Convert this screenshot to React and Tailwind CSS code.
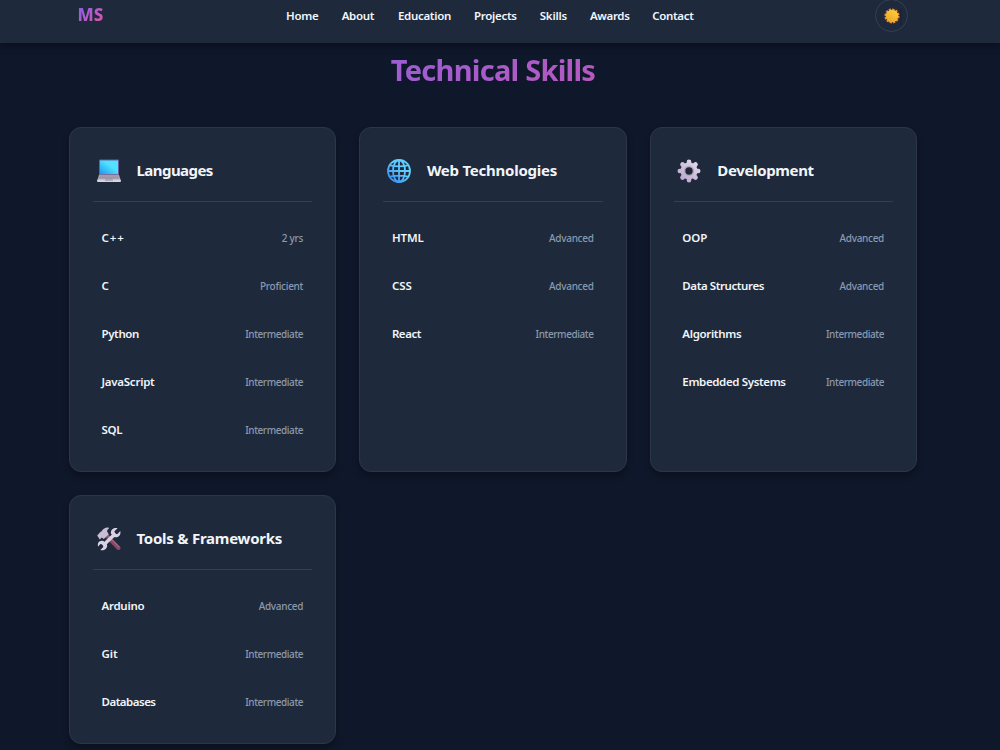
const nav = [
  ["Home", "w-[32.5px] tracking-[-0.3px]"],
  ["About", "w-[33px] tracking-[-0.3px]"],
  ["Education", "w-[53px] tracking-[-0.3px]"],
  ["Projects", "w-[42.5px] tracking-[-0.3px]"],
  ["Skills", "w-[27px] tracking-[-0.2px]"],
  ["Awards", "w-[39px] tracking-[-0.35px]"],
  ["Contact", "w-[42px] tracking-[-0.3px]"],
];

function Laptop() {
  return (
    <svg viewBox="0 0 24 24" className="size-6">
      <defs>
        <linearGradient id="screen" x1="1" y1="0" x2="0" y2="1">
          <stop offset="0.4" stopColor="#50e2ff" />
          <stop offset="1" stopColor="#1f98f0" />
        </linearGradient>
      </defs>
      <rect x="2" y="0.5" width="20" height="15.5" rx="0.8" fill="#66609a" />
      <rect x="3" y="1.5" width="18" height="13.5" fill="url(#screen)" />
      <path d="M2 15.8h20l1.6 5.2H.4z" fill="#aaa3b5" />
      <path d="M3 17h18M2.6 18.6h18.8" stroke="#8d8798" strokeWidth="0.7" strokeDasharray="1.4 .5" />
      <path d="M8.5 19.7h7l.4 1.5H8z" fill="#7d778a" />
      <rect x="0.2" y="20.6" width="23.6" height="2.4" rx="0.6" fill="#d8d3e2" />
      <path d="M8 21.4h8" stroke="#a29bae" strokeWidth="0.8" />
    </svg>
  );
}

function Globe() {
  return (
    <svg viewBox="0 0 24 24" className="size-6">
      <defs>
        <linearGradient id="globe" gradientUnits="userSpaceOnUse" x1="22" y1="2" x2="3" y2="22">
          <stop offset="0.4" stopColor="#5fcdff" />
          <stop offset="1" stopColor="#3a8cf0" />
        </linearGradient>
      </defs>
      <g fill="none" stroke="url(#globe)" strokeWidth="1.8">
        <circle cx="12" cy="12" r="11" />
        <ellipse cx="12" cy="12" rx="6" ry="11" />
        <path d="M12 1V23M1 12H23M3 6.3Q12 8.400 21 6.300M3 17.700Q12 15.600 21 17.700" />
      </g>
    </svg>
  );
}

function Gear() {
  return (
    <svg viewBox="0 0 24 24" className="size-6">
      <defs>
        <linearGradient id="gear" gradientUnits="userSpaceOnUse" x1="20" y1="2" x2="5" y2="22">
          <stop offset="0" stopColor="#e2dcec" />
          <stop offset="1" stopColor="#bba6cd" />
        </linearGradient>
      </defs>
      <g stroke="url(#gear)" strokeWidth="4.6" strokeLinecap="round">
        <path d="M12 2.800V21.200M2.800 12H21.200M5.500 5.500l13 13M18.500 5.500l-13 13" />
      </g>
      <circle cx="12" cy="12" r="8.5" fill="url(#gear)" />
      <circle cx="12" cy="12" r="5.200" fill="#b4a8c2" />
      <circle cx="12" cy="12" r="3.700" fill="#1f2939" />
    </svg>
  );
}

function Tools() {
  return (
    <svg viewBox="0 0 24 24" className="size-6">
      <path d="M9.5 8.5l12 12.5" stroke="#86496a" strokeWidth="4" strokeLinecap="round" />
      <path d="M11 8.8L22 20" stroke="#a9657a" strokeWidth="1.1" strokeLinecap="round" />
      <path d="M.2 8.400L3.600 4.700l.8-.2C5.800 2.200 7.400.5 11.500.4L12 1.500C10.300 2.600 9.900 3.400 10.300 5l1.500 2.200-5 4.800-2-1.500-2 2z" fill="#c6bed2" />
      <path d="M6 18.500L18.500 6.500" stroke="#d9d2e3" strokeWidth="3.600" />
      <path d="M20.600 1.200l-3.200 3 .5 2.400 2.400.6 3-3.100c.9 3.800-1.900 6.900-5.600 6.100l-3.700-3.500C13.100 3.200 16.500.2 20.600 1.200zM3.300 23l3-3-.5-2.400-2.400-.6L1.200 19.600c-1.600-3.600 1.500-6.600 5.200-5.600l3.500 3.300C11.100 20.900 7.600 24.300 3.300 23z" fill="#d9d2e3" />
    </svg>
  );
}

function Sun() {
  return (
    <svg viewBox="0 0 16 16" className="size-4">
      <defs>
        <linearGradient id="sun" x1="0.9" y1="0" x2="0.2" y2="1">
          <stop offset="0" stopColor="#ffd13c" />
          <stop offset="1" stopColor="#e9a52a" />
        </linearGradient>
      </defs>
      <circle cx="8" cy="8" r="6.6" fill="none" stroke="#ef8434" strokeWidth="2" strokeDasharray="2.300 1.156" />
      <circle cx="8" cy="8" r="6.300" fill="url(#sun)" />
    </svg>
  );
}

const levels = {
  "2 yrs": "tracking-[-0.25px]",
  Proficient: "tracking-[-0.28px]",
  Intermediate: "tracking-[-0.42px]",
  Advanced: "tracking-[-0.3px]",
};

const cards = [
  {
    title: "Languages", icon: Laptop, track: "tracking-[-0.55px]",
    skills: [
      ["C++", "2 yrs", "tracking-[0.9px]"],
      ["C", "Proficient", "tracking-normal"],
      ["Python", "Intermediate", "tracking-[-0.38px]"],
      ["JavaScript", "Intermediate", "tracking-[-0.25px]"],
      ["SQL", "Intermediate", "tracking-[-0.3px]"],
    ],
  },
  {
    title: "Web Technologies", icon: Globe, track: "tracking-[-0.24px]",
    skills: [
      ["HTML", "Advanced", "tracking-[-0.1px]"],
      ["CSS", "Advanced", "tracking-normal"],
      ["React", "Intermediate", "tracking-[-0.45px]"],
    ],
  },
  {
    title: "Development", icon: Gear, track: "tracking-[-0.36px]",
    skills: [
      ["OOP", "Advanced", "tracking-[-0.1px]"],
      ["Data Structures", "Advanced", "tracking-[-0.41px]"],
      ["Algorithms", "Intermediate", "tracking-[-0.33px]"],
      ["Embedded Systems", "Intermediate", "tracking-[-0.36px]"],
    ],
  },
  {
    title: "Tools & Frameworks", icon: Tools, track: "tracking-[-0.25px]",
    skills: [
      ["Arduino", "Advanced", "tracking-[-0.28px]"],
      ["Git", "Intermediate", "tracking-normal"],
      ["Databases", "Intermediate", "tracking-[-0.5px]"],
    ],
  },
];

function Card({ title, icon: Icon, track, skills }) {
  return (
    <section className="rounded-xl border border-[#2b3748] bg-[#1e293b] px-[23px] pt-[25px] pb-[22.5px] shadow-[0_4px_6px_rgba(0,0,0,0.3)]">
      <div className="flex h-[49px] items-start gap-4 border-b border-[#304153] pt-[6px] pl-[3.5px]">
        <Icon />
        <h3 className={`-mt-px text-[15px] leading-6 font-bold whitespace-nowrap text-[#f1f5f9] ${track}`}>{title}</h3>
      </div>
      <ul className="mt-[18px] flex flex-col gap-3">
        {skills.map(([name, level, cls]) => (
          <li key={name} className="flex h-9 items-center justify-between pr-[9px] pl-[8.5px]">
            <span className={`text-[11.5px] leading-4 font-semibold whitespace-nowrap text-[#f1f5f9] ${cls}`}>{name}</span>
            <span className={`text-[10px] leading-4 font-medium whitespace-nowrap text-[#8a99af] ${levels[level]}`}>{level}</span>
          </li>
        ))}
      </ul>
    </section>
  );
}

export default function App() {
  return (
    <div className="h-[750px] w-[1000px] overflow-hidden bg-[#0f172a] font-['Noto_Sans','Open_Sans',sans-serif]">
      <header className="relative flex h-[43px] items-start bg-[#1e293b] pl-[77.5px] shadow-[0_2px_8px_rgba(0,0,0,0.4)]">
        <div className="mt-[3.4px] w-[26.5px] bg-linear-135 from-[#7c5cf0] to-[#ec4899] bg-clip-text text-[17px] leading-6 font-extrabold tracking-[0.1px] text-transparent">MS</div>
        <nav className="mt-1 ml-[182px] flex gap-[23.2px]">
          {nav.map(([label, cls]) => (
            <a key={label} className={`text-[11.5px] leading-6 font-semibold whitespace-nowrap text-[#f1f5f9] ${cls}`}>{label}</a>
          ))}
        </nav>
        <button className="relative -mt-px ml-auto mr-[92px] flex size-[33px] items-center justify-center rounded-full border border-[#334155]">
          <Sun />
          <span className="absolute top-2 right-[5px] h-[17px] w-0.5 bg-[#1a2433]" />
        </button>
      </header>
      <main className="ml-[69px] w-[848px]">
        <h2 className="h-[84px] bg-linear-135 from-[#755cf0] to-[#dc4a9e] bg-clip-text pt-[7px] text-center text-[29px] leading-10 font-bold tracking-[-0.75px] text-transparent">Technical Skills</h2>
        <div className="grid grid-cols-3 gap-x-[23.25px] gap-y-[23.5px]">
          {cards.map((card) => (
            <Card key={card.title} {...card} />
          ))}
        </div>
      </main>
    </div>
  );
}
